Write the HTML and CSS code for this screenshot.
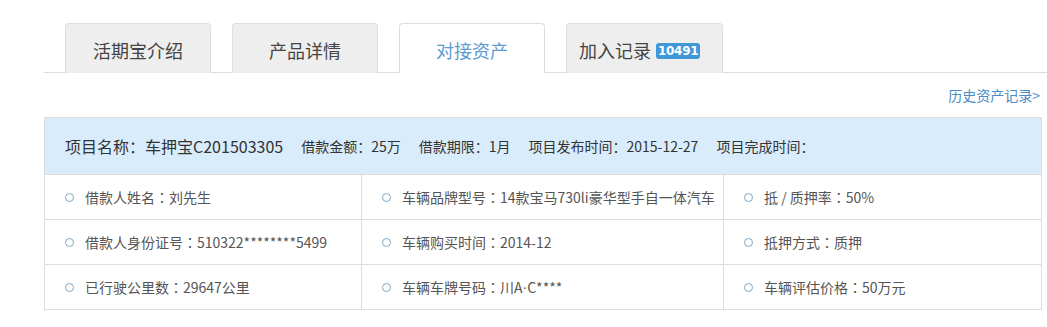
FILE: index.html
```html
<!DOCTYPE html>
<html lang="zh-CN">
<head>
<meta charset="utf-8">
<link rel="stylesheet" href="styles.css">
</head>
<body>
<div class="page">
  <div class="tabs">
    <div class="tab">活期宝介绍</div>
    <div class="tab">产品详情</div>
    <div class="tab active">对接资产</div>
    <div class="tab tab-wide">加入记录<span class="badge">10491</span></div>
  </div>
  <div class="history"><a class="history-link">历史资产记录&gt;</a></div>
  <div class="box">
    <div class="box-head">
      <span class="head-title">项目名称<span class="colon">：</span>车押宝C201503305</span>
      <span class="head-item">借款金额<span class="colon">：</span>25万</span>
      <span class="head-item">借款期限<span class="colon">：</span>1月</span>
      <span class="head-item">项目发布时间<span class="colon">：</span>2015-12-27</span>
      <span class="head-item">项目完成时间<span class="colon">：</span></span>
    </div>
    <div class="grid">
      <div class="cell"><i class="dot"></i>借款人姓名<span class="colon">：</span>刘先生</div>
      <div class="cell"><i class="dot"></i>车辆品牌型号<span class="colon">：</span>14款宝马730li豪华型手自一体汽车</div>
      <div class="cell last"><i class="dot"></i>抵 / 质押率<span class="colon">：</span>50%</div>
      <div class="cell"><i class="dot"></i>借款人身份证号<span class="colon">：</span>510322********5499</div>
      <div class="cell"><i class="dot"></i>车辆购买时间<span class="colon">：</span>2014-12</div>
      <div class="cell last"><i class="dot"></i>抵押方式<span class="colon">：</span>质押</div>
      <div class="cell"><i class="dot"></i>已行驶公里数<span class="colon">：</span>29647公里</div>
      <div class="cell"><i class="dot"></i>车辆车牌号码<span class="colon">：</span>川A<span class="latin">·</span>C****</div>
      <div class="cell last"><i class="dot"></i>车辆评估价格<span class="colon">：</span>50万元</div>
    </div>
  </div>
</div>
</body>
</html>
```
FILE: styles.css
```css
* { box-sizing: border-box; }
html, body { margin: 0; padding: 0; background: #fff; }
body {
  font-family: "Noto Sans CJK SC", "Noto Sans", sans-serif;
  color: #444;
  width: 1047px;
  height: 327px;
  overflow: hidden;
}
.page { padding-left: 44px; }
.tabs {
  display: flex;
  gap: 21px;
  padding: 23px 0 0 21px;
  border-bottom: 1px solid #dddddd;
  height: 73px;
}
.tab {
  width: 146px;
  height: 50px;
  margin-bottom: -1px;
  background: #eeeeee;
  border: 1px solid #dddddd;
  border-bottom: none;
  border-radius: 4px 4px 0 0;
  font-size: 18px;
  line-height: 48px;
  color: #444;
  display: flex;
  justify-content: center;
  align-items: center;
  padding-top: 2px;
}
.tab.active {
  background: #fff;
  color: #5b9bd0;
}
.tab-wide {
  width: 157px;
  justify-content: flex-start;
  padding-left: 12px;
}
.badge {
  margin-left: 5px;
  background: #3f98d8;
  color: #fff;
  font-family: "DejaVu Sans", sans-serif;
  font-weight: bold;
  font-size: 12px;
  line-height: 16px;
  height: 16px;
  padding: 0 2px;
  border-radius: 3px;
  margin-top: 2px;
  letter-spacing: -0.3px;
}
.history {
  display: flex;
  justify-content: flex-end;
  padding: 12px 7px 0 0;
  height: 44px;
}
.history-link {
  font-size: 14px;
  line-height: 20px;
  color: #4a8cc6;
}
.box {
  width: 998px;
  border: 1px solid #dddddd;
  border-bottom: none;
}
.box-head {
  height: 57px;
  background: #d9ecfb;
  border-bottom: 1px solid #dddddd;
  display: flex;
  align-items: center;
  padding-left: 20px;
  font-size: 14px;
  color: #333;
}
.head-title { font-size: 16px; margin-right: 18px; }
.head-item { margin-right: 18px; }
.colon { font-family: "Noto Sans CJK TC", "Noto Sans CJK SC", sans-serif; }
.latin { font-family: "Liberation Sans", sans-serif; }
.grid {
  display: grid;
  grid-template-columns: 317px 362px 1fr;
}
.cell {
  height: 45px;
  border-right: 1px solid #dddddd;
  border-bottom: 1px solid #dddddd;
  display: flex;
  align-items: center;
  padding-left: 20px;
  font-size: 14px;
  color: #555;
}
.cell.last { border-right: none; }
.dot {
  width: 9px;
  height: 9px;
  border: 1px solid #7ea7c4;
  border-radius: 50%;
  margin-right: 11px;
  flex: none;
}
```
